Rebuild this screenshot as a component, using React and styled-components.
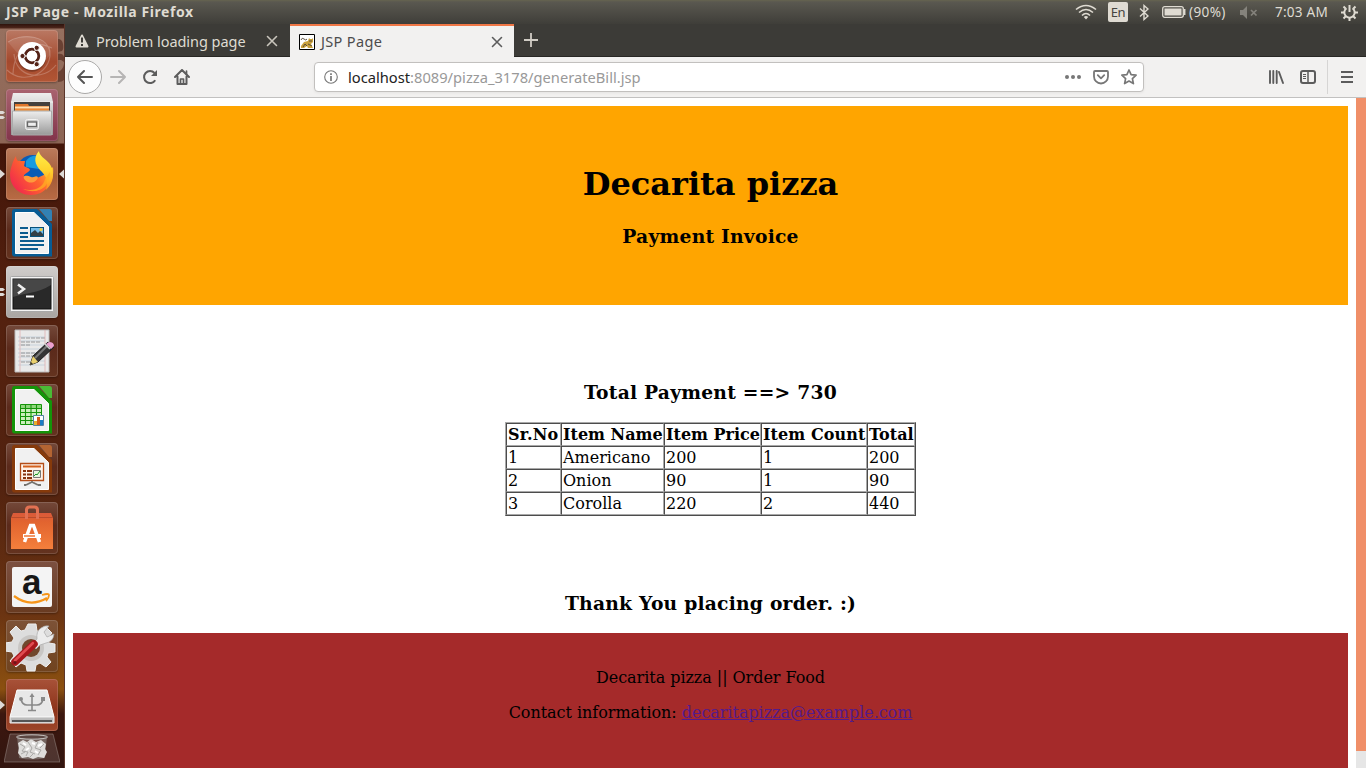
import React from "react";
import styled, { createGlobalStyle, css } from "styled-components";

const GlobalStyle = createGlobalStyle`
  * { box-sizing: border-box; }
  html, body { margin: 0; padding: 0; overflow: hidden; background: #fff; }
  svg { display: block; flex: none; }
`;

const ui = css`font-family: "Noto Sans", "Open Sans", sans-serif;`;

const Desktop = styled.div`
  width: 1366px;
  height: 768px;
  display: grid;
  grid-template: 24px 744px / 65px 1301px;
  overflow: hidden;
`;

const MenuBar = styled.header`
  ${ui}
  grid-column: 1 / 3;
  display: flex;
  align-items: center;
  padding: 0 8px 0 6px;
  color: #dfdbd2;
  font-size: 13.6px;
  line-height: 24px;
  background: linear-gradient(#66644f 0, #5a5850 2px, #3f3e39 100%);
`;
const WindowTitle = styled.div`
  font-weight: 700;
  font-size: 14px;
  letter-spacing: 0.6px;
  flex: 1;
  white-space: nowrap;
`;
const Indicators = styled.div`
  display: flex;
  align-items: center;
  white-space: nowrap;
`;
const Indicator = styled.div`
  display: flex;
  align-items: center;
  margin-left: ${(p) => p.$gap}px;
  width: ${(p) => p.$w}px;
  letter-spacing: ${(p) => p.$track || 0}px;
`;
const Language = styled(Indicator)`
  height: 20px;
  border-radius: 2px;
  justify-content: center;
  background: #dfdbd2;
  color: #45443f;
  font-size: 13px;
`;

const Launcher = styled.nav`
  display: flex;
  flex-direction: column;
  gap: 7px;
  padding-top: 6px;
  overflow: hidden;
  border-right: 1px solid #5b352a;
  background: linear-gradient(#2e130c 0, #4d261b 4px, #96705f 5px, #8d6555 119px, #421509 120px, #54210f 280px, #52220f 460px, #6b3412 590px, #8b5010 665px, #3c170f 690px, #32150f 100%);
`;
const Slot = styled.div`
  display: grid;
  grid-template-columns: 6px 52px 6px;
  align-items: center;
  height: 52px;
  flex: none;
`;
const Tile = styled.div`
  width: 52px;
  height: 52px;
  border-radius: 4px;
  overflow: hidden;
  background: ${(p) => p.$bg};
  box-shadow: inset 0 0 0 1px rgba(255, 255, 255, 0.14), 0 1px 2px rgba(0, 0, 0, 0.3);
`;
const Trash = styled.div`
  margin: -5px 0 0 4px;
  width: 56px;
  height: 34px;
`;

const Browser = styled.main`
  display: grid;
  grid-template-rows: 33px 41px 670px;
  min-width: 0;
`;
const TabStrip = styled.div`
  ${ui}
  display: flex;
  background: #3c3b37;
  box-shadow: inset 0 -1px #282724;
`;
const Tab = styled.div`
  display: flex;
  align-items: center;
  height: 33px;
  width: ${(p) => (p.$active ? 224 : 225)}px;
  padding: 0 ${(p) => (p.$active ? 9 : 10)}px;
  gap: ${(p) => (p.$active ? 6 : 7)}px;
  font-size: 14.5px;
  color: ${(p) => (p.$active ? "#4c4c4c" : "#dfdbd2")};
  background: ${(p) => (p.$active ? "#f2f1f0" : "transparent")};
  border-top: ${(p) => (p.$active ? "2px solid #f07746" : "0")};
`;
const TabLabel = styled.span`
  flex: 1;
  white-space: nowrap;
  line-height: 20px;
  padding-bottom: ${(p) => p.$lift || 0}px;
  letter-spacing: ${(p) => p.$track || 0}px;
`;
const NewTab = styled.div`
  padding: 9px 0 0 10px;
`;
const Toolbar = styled.div`
  ${ui}
  display: flex;
  align-items: center;
  background: #f2f1f0;
  border-bottom: 1px solid #c2c1c0;
  padding-left: 3px;
`;
const Back = styled.div`
  width: 34px;
  height: 34px;
  border: 1px solid #aaa9a8;
  border-radius: 50%;
  background: #fdfdfd;
  display: grid;
  place-items: center;
`;
const NavIcons = styled.div`
  display: flex;
  gap: 16px;
  margin-left: 8px;
  width: 204px;
`;
const UrlBar = styled.div`
  display: flex;
  align-items: center;
  width: 830px;
  height: 30px;
  border: 1px solid #c2c0be;
  border-radius: 4px;
  background: #fff;
  padding: 0 6px 0 9px;
  gap: 12px;
  font-size: 14.7px;
  color: #999;
  box-shadow: 0 1px 3px rgba(0, 0, 0, 0.06);
`;
const UrlText = styled.span`
  flex: 1;
  margin-left: -2px;
  b { font-weight: 400; color: #222; }
`;
const ToolIcons = styled.div`
  display: flex;
  gap: 16px;
  margin-left: 124px;
  width: 59px;
`;
const MenuButton = styled.div`
  display: grid;
  place-items: center;
  height: 34px;
  width: 38px;
  border-left: 1px solid #d6d5d4;
`;

const Viewport = styled.div`
  display: grid;
  grid-template-columns: 1291px 10px;
  overflow: hidden;
  background: #fff;
`;
const Page = styled.article`
  padding: 8px;
  height: 670px;
  overflow: hidden;
  font-family: "DejaVu Serif", serif;
  font-size: 16px;
  line-height: 19px;
  color: #000;
  text-align: center;
`;
const Banner = styled.section`
  height: 199px;
  background: orange;
  padding-top: 59px;
`;
const Heading = styled.h1`
  margin: 0 0 22px;
  font-size: 32px;
  line-height: 38px;
`;
const Subheading = styled.h3`
  margin: 0;
  font-size: 18.72px;
  line-height: 22px;
  letter-spacing: 0.22px;
`;
const Invoice = styled.section`
  height: 328px;
  padding-top: 76px;
`;
const BillTable = styled.table`
  margin: 19px auto 76px;
  width: 411px;
  table-layout: fixed;
  border: 1px solid;
  border-color: #a9a9a9 #4c4c4c #4c4c4c #a9a9a9;
  border-spacing: 0;
  text-align: left;
  th, td {
    height: 23px;
    padding: 1px;
    border: 1px solid;
    border-color: #4c4c4c #a9a9a9 #a9a9a9 #4c4c4c;
    white-space: nowrap;
  }
  th:nth-child(1) { letter-spacing: 0.2px; }
  th:nth-child(4) { letter-spacing: 0.08px; }
`;
const Footer = styled.footer`
  height: 160px;
  padding-top: 35px;
  background: brown;
  letter-spacing: -0.04px;
  p { margin: 0 0 16px; }
  a { color: #551a8b; }
`;
const ScrollTrack = styled.div`
  background: #e6e6e6;
`;
const ScrollThumb = styled.div`
  height: 653px;
  background: #f08f68;
`;

const Arrow = ({ color, flip }) => (
  <svg width="16" height="16" viewBox="0 0 16 16" fill="none" stroke={color} strokeWidth="2" strokeLinecap="round" strokeLinejoin="round">
    <path d={flip ? "M1 8h14M9 2l6 6-6 6" : "M15 8H1M7 2L1 8l6 6"} />
  </svg>
);
const Close = ({ color }) => (
  <svg width="16" height="16" viewBox="0 0 16 16" stroke={color} strokeWidth="1.6" strokeLinecap="round">
    <path d="M3.5 3.5l9 9M12.5 3.5l-9 9" />
  </svg>
);

const Art = ({ children }) => <svg width="52" height="52" viewBox="0 0 52 52">{children}</svg>;

const UbuntuArt = () => (
  <Art>
    <g fill="none" stroke="#fff" strokeOpacity=".22" strokeWidth="1.2">
      <path d="M2 12C14 3 44 4 44 25M7 44C8 18 25 8 46 18M1 40C18 57 50 42 43 17M8 24C10 49 38 51 50 35" />
    </g>
    <path d="M2 12C14 3 44 4 44 25L40 30 12 24z" fill="#fff" opacity=".1" />
    <circle cx="26" cy="27.5" r="14.2" fill="#35160d" opacity=".35" />
    <circle cx="26" cy="26" r="14" fill="#fff" />
    <circle cx="26" cy="26" r="6.800" fill="none" stroke="#542216" strokeWidth="2.800" />
    <path d="M26 26l5 8.600M26 26l5-8.600M26 26H16" stroke="#fff" strokeWidth="1" />
    <circle cx="26" cy="26" r="5" fill="#fff" />
    <g fill="#542216" stroke="#fff"><circle cx="16.500" cy="26" r="2.600" /><circle cx="30.700" cy="17.800" r="2.600" /><circle cx="30.700" cy="34.200" r="2.600" /></g>
  </Art>
);
const FilesArt = () => (
  <Art>
    <defs><linearGradient id="cab" x2="0" y2="1"><stop stopColor="#eee" /><stop offset="1" stopColor="#999" /></linearGradient></defs>
    <path d="M7 4h38l2 9v33H5V13z" fill="url(#cab)" />
    <path d="M5 13h42" stroke="#fff" opacity=".7" />
    <path d="M8 13h36v12H8z" fill="#44403d" />
    <path d="M9 15h13l1 2h20v8H9z" fill="#e0762b" /><path d="M9 18.5h34" stroke="#ffe0b0" strokeWidth="2" /><path d="M9 21.5h34" stroke="#f79a45" strokeWidth="2" />
    <path d="M6.500 22h39v24h-39z" fill="url(#cab)" stroke="#aaa" />
    <rect x="19.5" y="30.500" width="13" height="10" rx="2" fill="#c9c9c9" stroke="#f2f2f2" />
    <rect x="21.5" y="33" width="9" height="4.500" fill="#eee" stroke="#666" strokeWidth="1.300" />
  </Art>
);
const FirefoxArt = () => (
  <Art>
    <defs>
      <linearGradient id="fox" x1="0" x2="1" y1=".8" y2=".1"><stop stopColor="#ef2350" /><stop offset=".5" stopColor="#ff642e" /><stop offset="1" stopColor="#ffcf2b" /></linearGradient>
      <linearGradient id="tail" x2="0" y2="1"><stop stopColor="#fff04b" /><stop offset=".5" stopColor="#ffd32c" /><stop offset="1" stopColor="#ff8a25" /></linearGradient>
    </defs>
    <circle cx="27" cy="24" r="17" fill="#0a5cb6" />
    <path d="M20 13c3-5 8-6 13-5v13l-13-2z" fill="#159be0" />
    <path d="M10 8c0 3 1 4 2 5l7 0-1 5c2 2 5 1 6 4-2 3-7 4-6 7 3 5 9 5 13 1l9-4 7-7c2 16-8 28-22 28C10 47 1 34 5 20c1-3 2-8 5-12z" fill="url(#fox)" />
    <path d="M19 32c-4-5 2-5 6-3 4 1 4-2 7 0-1 5-8 8-13 3z" fill="#ff9a3b" />
    <path d="M33 3c0 4 6 8 9 11 8 8 6 21-2 28 3-11-1-15-6-20-5-6-7-12-1-19z" fill="url(#tail)" />
    <path d="M39 31c-2 9-11 13-22 10 11 5 27 2 27-17z" fill="#ffae22" opacity=".75" />
  </Art>
);
const OfficeArt = ({ color, corner, children }) => (
  <Art>
    <path d="M8.500 2H31l15 15v32.500H8.500q-2.500 0-2.500-3V5q0-3 2.500-3z" fill={color} />
    <path d="M9.500 5.500H28l14.500 14v27h-33z" fill="#f1f1f1" stroke="#fff" />
    <path d="M33 2h10.500q2.500 0 2.500 3v9h-3z" fill={corner} />
    {children}
  </Art>
);
const WriterArt = () => (
  <OfficeArt color="#075c94" corner="#3281b3">
    <path d="M14 21h8M14 26h8M14 30h8M14 34h24M14 38h24M14 42h18" stroke="#0b5c8f" strokeWidth="2" />
    <rect x="24.500" y="20.500" width="13" height="9" fill="#75bde9" stroke="#07527c" />
    <path d="M25 29v-3l4-3 3 3 2-2 3 3v2z" fill="#323f46" /><circle cx="35" cy="22.500" r="1.500" fill="#f4ce3b" />
  </OfficeArt>
);
const CalcArt = () => (
  <OfficeArt color="#149409" corner="#4aba35">
    <path d="M14.500 20.500h21v20h-21z" fill="#ccefbd" stroke="#149409" />
    <path d="M15 21h20v3H15z" fill="#8fd67c" />
    <path d="M14 24.500h22M14 28.500h22M14 32.500h22M14 36.500h22M19.500 20v21M25 20v21M30.500 20v21" stroke="#149409" strokeWidth="1.100" />
    <path d="M27.500 31.500h10v10h-10z" fill="#fff" stroke="#5280a5" />
    <path d="M29.500 41v-4" stroke="#e9ae2b" strokeWidth="3" /><path d="M32.500 41v-8" stroke="#d55c17" strokeWidth="3" /><path d="M35.500 41v-5" stroke="#1b7bc4" strokeWidth="3" />
  </OfficeArt>
);
const ImpressArt = () => (
  <OfficeArt color="#863a0b" corner="#b46432">
    <path d="M14.500 20.500h23v17h-23z" fill="#fff3e9" stroke="#b44d18" strokeWidth="1.300" />
    <path d="M17 23.500h18" stroke="#d3611e" strokeWidth="2" />
    <path d="M17 28h3m1 0h5M17 31.500h3m1 0h5M17 35h3m1 0h5" stroke="#87330e" strokeWidth="2" />
    <path d="M27.500 27.500h7v7h-7z" fill="#e8f5df" stroke="#777" /><path d="M28 33l2-2 1 1 3-4" fill="none" stroke="#189621" />
    <path d="M26 38v2m-6 2l6-3 6 3m-12 0h-2m14 0h3" stroke="#75736f" strokeWidth="1.800" fill="none" />
  </OfficeArt>
);
const TerminalArt = () => (
  <Art>
    <rect x="4.500" y="10.500" width="43" height="35" rx="1" fill="#f4f4f4" stroke="#a8a8a8" />
    <rect x="7" y="13" width="38" height="30" fill="#292929" stroke="#111" />
    <path d="M7 13h38v6C30 28 22 26 7 31z" fill="#fff" opacity=".14" />
    <path d="M12 18.500l6 4.500-6 4.500" fill="none" stroke="#eee" strokeWidth="2.500" /><path d="M20 30.500h8" stroke="#fff" strokeWidth="2" />
  </Art>
);
const EditorArt = () => (
  <Art>
    <path d="M9 5h34v42H9z" fill="#e9e9e9" stroke="#bbb" />
    <path d="M12 12h27M12 16h27M12 20h27M12 24h27M12 28h27M12 32h27M12 36h27M12 40h27" stroke="#c7d2dc" />
    <path d="M15 13h24M15 17h20M15 20h9M15 28h17M15 31h20M15 37h10" stroke="#999" strokeWidth="1.200" strokeDasharray="4 1" />
    <path d="M14 5v42M39 5v42" stroke="#dfa9ab" strokeWidth=".7" />
    <path d="M24 40l3-9L42 17l6 5-16 15z" fill="#353535" stroke="#1c1c1c" /><path d="M29 33l14-14" stroke="#777" strokeWidth="2" />
    <path d="M24 40l3-9 5 6z" fill="#ead16e" /><path d="M24 40l1-3 2 2z" fill="#333" />
    <path d="M40 19l3-2q5 0 5 4l-3 3z" fill="#eba0cf" /><path d="M39 19l5 5" stroke="#ccc" strokeWidth="1.500" />
  </Art>
);
const StoreArt = () => (
  <Art>
    <defs><linearGradient id="bag" x2="0" y2="1"><stop stopColor="#d9593a" /><stop offset=".25" stopColor="#e2642f" /><stop offset="1" stopColor="#f47f3c" /></linearGradient></defs>
    <path d="M7 11h38l2 5v31H5V16z" fill="url(#bag)" />
    <path d="M5 15.500h42" stroke="#b84b2c" />
    <path d="M20.500 17V8q0-3 3-3h5q3 0 3 3v9" fill="none" stroke="#e27152" strokeWidth="3" />
    <path d="M18.500 40l6-16.500h3l6 16.500" fill="none" stroke="#fff" strokeWidth="3.500" /><path d="M17 34h18" stroke="#fff" strokeWidth="4" /><path d="M18 34h11" stroke="#ef7434" strokeWidth="1.500" />
  </Art>
);
const AmazonLetter = styled.text`
  font: 700 35px "Liberation Sans", sans-serif;
  fill: #171717;
`;
const AmazonArt = () => (
  <Art>
    <rect x="6" y="6" width="40" height="40" rx="2" fill="#f4f4f4" />
    <AmazonLetter x="16" y="32.500">a</AmazonLetter>
    <path d="M8 35q16 12 33 2" fill="none" stroke="#f69519" strokeWidth="2.200" /><path d="M36 34q7-2 7 0 0 3-3 6" fill="none" stroke="#f69519" strokeWidth="1.800" />
  </Art>
);
const SettingsArt = () => (
  <Art>
    <path d="M22 4h8l1 7 4 1 5-5 6 6-5 6 2 4 6 1v8l-7 1-1 4 4 5-5 5-6-4-4 2-1 6h-8l-1-6-5-2-5 4-6-6 4-5-2-4-7-1v-8l7-1 2-4-4-6 6-6 5 5 4-1z" fill="#ddd" stroke="#eee" />
    <circle cx="25" cy="28" r="13" fill="#c8c6c4" /><circle cx="25" cy="28" r="9" fill="#70472c" />
    <path d="M26 25l5-6q-1-8 4-11 4-3 8-2l-5 6 3 5 7-3q-1 8-8 9l-6 2-4 4z" fill="#ececec" stroke="#aaa" strokeWidth=".7" />
    <path d="M9 42L28 24" stroke="#a8171b" strokeWidth="7.500" strokeLinecap="round" />
    <path d="M9 40.500L27 23" stroke="#e14b50" strokeWidth="2.500" strokeLinecap="round" />
    <circle cx="9" cy="42.500" r="1.500" fill="#6b1518" />
  </Art>
);
const DriveArt = () => (
  <Art>
    <path d="M11 11h30l7 27H4z" fill="#e8e8e8" stroke="#fff" /><path d="M4 38h44v6H4z" fill="#bbb" stroke="#f0f0f0" /><path d="M6 42h40" stroke="#333" strokeWidth="1.500" />
    <path d="M26 17v15M15 20q1 6 6 6h10q5 0 6-6M22 31.500h8" fill="none" stroke="#898989" strokeWidth="1.600" />
    <path d="M23.500 18l2.500-4 2.500 4z" fill="#898989" /><circle cx="15" cy="20" r="2" fill="#898989" /><path d="M35 18h4v4h-4z" fill="#898989" />
  </Art>
);
const TrashArt = () => (
  <svg width="56" height="34" viewBox="0 0 56 34">
    <path d="M6 1h43l7 28H0z" fill="#8c7b76" fillOpacity=".3" stroke="#a99b96" strokeOpacity=".45" />
    <path d="M13 3h30l-2 22q-13 3-26 0z" fill="#9a9692" fillOpacity=".5" />
    <path d="M14 10l5-3 4 2 4-3 5 3 5-2 5 4-1 5 2 3-3 6-6-1-5 2-5-2-6 1-4-5 1-5z" fill="#dedddb" />
    <path d="M16 11l5 3-3 4 6 1-2 4M24 9l4 6-2 4 5 2M34 9l-3 6 6 2-3 5M40 11l-4 4M17 21l4-2M26 24l3-3" fill="none" stroke="#aaa9a7" />
    <path d="M19 10l3 2M28 10l3 1M34 13l4-2M22 17l3-2M31 18l3 2" stroke="#fff" strokeWidth="2" />
    <ellipse cx="28" cy="4" rx="15.500" ry="2.200" fill="#5b4742" stroke="#c8c5c2" />
  </svg>
);

const glass = "linear-gradient(#74493a, #5b2a1b 45%, #64331f)";
const launcherItems = [
  { Icon: UbuntuArt, bg: "linear-gradient(#ba7863, #a4492d 60%, #b25635)", emblem: true },
  { Icon: FilesArt, bg: "linear-gradient(#a9636f, #82344b)", left: 2 },
  { Icon: FirefoxArt, bg: "linear-gradient(#bc7b5b, #a35b38 55%, #b96b44)", left: 1, right: true },
  { Icon: WriterArt, bg: glass },
  { Icon: TerminalArt, bg: "linear-gradient(#d0cdcb, #a9a5a2)", left: 2 },
  { Icon: EditorArt, bg: glass },
  { Icon: CalcArt, bg: glass },
  { Icon: ImpressArt, bg: glass },
  { Icon: StoreArt, bg: glass },
  { Icon: AmazonArt, bg: "linear-gradient(#7c5040, #693b21)" },
  { Icon: SettingsArt, bg: "linear-gradient(#7d5237, #70431f)" },
  { Icon: DriveArt, bg: "linear-gradient(#a85239, #8d341a 60%, #9d462a)", left: 1 },
];

const Running = ({ count, right }) => (
  <svg width="6" height="12" viewBox="0 0 6 12" fill="#dedad7">
    {right && <path d="M6 1.500v9L1 6z" />}
    {count === 1 && <path d="M0 1.500v9L5 6z" />}
    {count === 2 && <path d="M0 2h3l2 1.500L3 5H0zM0 7h3l2 1.500L3 10H0z" />}
  </svg>
);
const EmblemEdge = () => (
  <svg width="6" height="52" viewBox="0 0 6 52" fill="#6a4133">
    <path d="M0 9q4 0 5 5t-1 7l-4 1zM0 24q5-1 6 3v5l-3-2H0zM6 34v16q-2 2-6 2V42q5-2 6-8z" />
  </svg>
);

const bill = [
  ["1", "Americano", "200", "1", "200"],
  ["2", "Onion", "90", "1", "90"],
  ["3", "Corolla", "220", "2", "440"],
];

export default function App() {
  return (
    <Desktop>
      <GlobalStyle />
      <MenuBar>
        <WindowTitle>JSP Page - Mozilla Firefox</WindowTitle>
        <Indicators>
          <svg width="22" height="16" viewBox="0 0 22 16" fill="none" stroke="#dfdbd2" strokeWidth="1.600">
            <path d="M1 5.500q10-8 20 0M4 8.500q7-6 14 0M7 11.500q4-4 8 0" /><path d="M8.800 13q2.200-2 4.400 0L11 15.500z" fill="#dfdbd2" stroke="none" />
          </svg>
          <Language $gap={11} $w={20} $track={-0.5}>En</Language>
          <Indicator $gap={11} $w={11}>
            <svg width="10" height="17" viewBox="0 0 10 17" fill="none" stroke="#dfdbd2" strokeWidth="1.400"><path d="M1 4.500l8 7.500-4 3.500v-14L9 5l-8 7.500" /></svg>
          </Indicator>
          <Indicator $gap={12} $w={24}>
            <svg width="24" height="12" viewBox="0 0 24 12"><rect x=".7" y=".7" width="20.600" height="10.600" rx="2" fill="none" stroke="#dfdbd2" strokeWidth="1.300" /><path d="M2.500 2.500h17v7h-17z" fill="#dfdbd2" /><path d="M22.700 3v6" stroke="#dfdbd2" strokeWidth="1.500" /></svg>
          </Indicator>
          <Indicator $gap={3} $w={40} $track={0.35}>(90%)</Indicator>
          <Indicator $gap={11} $w={18}>
            <svg width="18" height="13" viewBox="0 0 18 13"><path d="M0 4h3l4-4v13L3 9H0z" fill="#85837c" /><path d="M11 4l5.500 5.500M16.500 4L11 9.500" stroke="#85837c" strokeWidth="1.700" /></svg>
          </Indicator>
          <Indicator $gap={17} $w={55} $track={0.2}>7:03 AM</Indicator>
          <Indicator $gap={11} $w={17}>
            <svg width="17" height="17" viewBox="0 0 17 17" fill="none" stroke="#dfdbd2"><path d="M5.500 4.200a5.200 5.200 0 1 0 6 0" strokeWidth="2" /><path d="M8.500 1v7" strokeWidth="2" /><path d="M3.500 8.500H0M13.500 8.500H17M5 12l-2.500 2.500M12 12l2.500 2.500M4.500 4.500L2.500 2.500M12.500 4.500l2-2M8.500 14v3" strokeWidth="2" /></svg>
          </Indicator>
        </Indicators>
      </MenuBar>

      <Launcher>
        {launcherItems.map(({ Icon, bg, left, right, emblem }, i) => (
          <Slot key={i}>
            <Running count={left} />
            <Tile $bg={bg}><Icon /></Tile>
            {emblem ? <EmblemEdge /> : <Running right={right} />}
          </Slot>
        ))}
        <Trash><TrashArt /></Trash>
      </Launcher>

      <Browser>
        <TabStrip>
          <Tab>
            <svg width="14" height="14" viewBox="0 0 14 14"><path d="M7 1.500l5.500 11h-11z" fill="#dfdbd2" stroke="#dfdbd2" strokeWidth="2" strokeLinejoin="round" /><path d="M7 3.500v5M7 10v2" stroke="#3c3b37" strokeWidth="2" /></svg>
            <TabLabel $track={-0.05}>Problem loading page</TabLabel>
            <Close color="#c9c5bc" />
          </Tab>
          <Tab $active>
            <svg width="16" height="16" viewBox="0 0 16 16">
              <path d="M.5.5h15v15H.5z" fill="#fff" stroke="#000" />
              <path d="M2 12l3-4 4-1 1-3 1 1h2l1-1v4l-2 2 2 4H9l-1-2-3 2H2z" fill="#caa13c" /><path d="M2 6q1-3 3-1t3 0M4 13l2-3 2 2M10 7h3M9 10l4 2" fill="none" stroke="#514534" strokeWidth=".9" />
            </svg>
            <TabLabel $track={0.35} $lift={2}>JSP Page</TabLabel>
            <Close color="#5c5c5c" />
          </Tab>
          <NewTab><svg width="14" height="14" viewBox="0 0 14 14" stroke="#d1cdc5" strokeWidth="1.800"><path d="M0 7h14M7 0v14" /></svg></NewTab>
        </TabStrip>

        <Toolbar>
          <Back><Arrow color="#555" /></Back>
          <NavIcons>
            <Arrow color="#b6b5b4" flip />
            <svg width="16" height="16" viewBox="0 0 16 16" fill="none" stroke="#5c5c5c" strokeWidth="2"><path d="M13.200 11.200A6 6 0 1 1 12.500 4" /><path d="M15 1v6H9z" fill="#5c5c5c" stroke="none" /></svg>
            <svg width="16" height="16" viewBox="0 0 16 16" fill="none" stroke="#5c5c5c" strokeWidth="2" strokeLinejoin="round" strokeLinecap="round"><path d="M1 8l7-7 7 7M3.500 7.500V15h9V7.500" /><path d="M6.500 15v-5h3v5M12.500 2v3" strokeWidth="1.700" /></svg>
          </NavIcons>
          <UrlBar>
            <svg width="14" height="14" viewBox="0 0 14 14"><circle cx="7" cy="7" r="6.300" fill="none" stroke="#777" strokeWidth="1.100" /><path d="M7 6v5M7 3.200v1.700" stroke="#777" strokeWidth="1.700" /></svg>
            <UrlText><b>localhost</b>:8089/pizza_3178/generateBill.jsp</UrlText>
            <svg width="16" height="16" viewBox="0 0 16 16" fill="#777"><circle cx="2" cy="8" r="2" /><circle cx="8" cy="8" r="2" /><circle cx="14" cy="8" r="2" /></svg>
            <svg width="16" height="16" viewBox="0 0 16 16" fill="none" stroke="#777" strokeWidth="1.800" strokeLinejoin="round" strokeLinecap="round"><path d="M2 2h12q1 0 1 1v4.500a7 7 0 0 1-14 0V3q0-1 1-1z" /><path d="M4.800 6.200L8 9.300l3.200-3.100" /></svg>
            <svg width="16" height="16" viewBox="0 0 16 16" fill="none" stroke="#777" strokeWidth="1.700" strokeLinejoin="round"><path d="M8 1l2.100 4.600 5 .6-3.700 3.400 1 5L8 12.100l-4.400 2.500 1-5L.9 6.200l5-.6z" /></svg>
          </UrlBar>
          <ToolIcons>
            <svg width="16" height="16" viewBox="0 0 16 16" stroke="#5c5c5c" strokeWidth="1.900" strokeLinecap="round"><path d="M2 2v12M5.300 2v12M8.700 2v12M11 3l4 11" /></svg>
            <svg width="16" height="16" viewBox="0 0 16 16" fill="none" stroke="#5c5c5c"><rect x="1" y="2" width="14" height="12" rx="2" strokeWidth="2" /><path d="M8 2v12" strokeWidth="1.500" /><path d="M3 5.500h3M3 7.500h3M3 9.500h3" /></svg>
          </ToolIcons>
          <MenuButton><svg width="12" height="12" viewBox="0 0 12 12" stroke="#5c5c5c" strokeWidth="2"><path d="M0 1h12M0 6h12M0 11h12" /></svg></MenuButton>
        </Toolbar>

        <Viewport>
          <Page>
            <Banner>
              <Heading>Decarita pizza</Heading>
              <Subheading>Payment Invoice</Subheading>
            </Banner>
            <Invoice>
              <Subheading>Total Payment ==&gt; 730</Subheading>
              <BillTable>
                <colgroup>{[55, 103, 97, 106, 48].map((w) => <col key={w} width={w} />)}</colgroup>
                <thead><tr>{["Sr.No", "Item Name", "Item Price", "Item Count", "Total"].map((h) => <th key={h}>{h}</th>)}</tr></thead>
                <tbody>{bill.map((row) => <tr key={row[0]}>{row.map((v, i) => <td key={i}>{v}</td>)}</tr>)}</tbody>
              </BillTable>
              <Subheading>Thank You placing order. :)</Subheading>
            </Invoice>
            <Footer>
              <p>Decarita pizza || Order Food</p>
              <p>Contact information: <a href="#contact">decaritapizza@example.com</a></p>
            </Footer>
          </Page>
          <ScrollTrack><ScrollThumb /></ScrollTrack>
        </Viewport>
      </Browser>
    </Desktop>
  );
}
